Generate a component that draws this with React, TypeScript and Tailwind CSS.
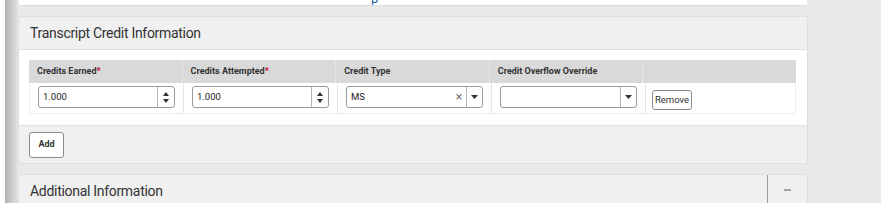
import React from "react";

const font = { fontFamily: "Roboto, 'Liberation Sans', sans-serif" };

function Spinner() {
  return (
    <div className="w-[17px] h-full border-l border-[#b5b5b5] flex flex-col items-center justify-center gap-[3px]">
      <svg width="6" height="4" viewBox="0 0 6 4">
        <path d="M3 0 L6 4 L0 4 Z" fill="#333" />
      </svg>
      <svg width="6" height="4" viewBox="0 0 6 4">
        <path d="M0 0 L6 0 L3 4 Z" fill="#333" />
      </svg>
    </div>
  );
}

function Caret() {
  return (
    <div className="w-[16px] h-full border-l border-[#b5b5b5] flex items-center justify-center">
      <svg width="7" height="4" viewBox="0 0 7 4">
        <path d="M0 0 L7 0 L3.5 4 Z" fill="#333" />
      </svg>
    </div>
  );
}

function NumberInput({ value }: { value: string }) {
  return (
    <div className="h-[22px] w-[137px] border border-[#9a9a9a] rounded-[3px] bg-white flex items-center">
      <span className="flex-1 pl-[4px] text-[9.5px] text-[#222]">{value}</span>
      <Spinner />
    </div>
  );
}

function Header({ label, required }: { label: string; required?: boolean }) {
  return (
    <div className="flex-1 border-r border-[#e6e6e6] last:border-r-0 px-[8px] flex items-center text-[9px] font-bold text-[#333]">
      {label}
      {required && <span className="text-[#d0021b]">*</span>}
    </div>
  );
}

function Cell({ children }: { children?: React.ReactNode }) {
  return (
    <div className="flex-1 border-r border-[#e6e6e6] last:border-r-0 px-[8px] pt-[3px]">
      {children}
    </div>
  );
}

export default function App() {
  return (
    <div className="w-[889px] h-[211px] bg-white overflow-hidden" style={font}>
      <div className="ml-[5px] w-[876px] h-[203px] bg-[#e9e9e9] flex overflow-hidden">
        <div className="w-[13px] shrink-0 bg-gradient-to-r from-[#b2b2b2] to-[#e4e4e4]" />
        <div className="w-[788px] ml-[1px] shrink-0 flex flex-col">
          {/* cut-off panel above */}
          <div className="h-[6px] shrink-0 bg-white border-b border-[#dcdcdc] relative overflow-hidden">
            <span className="absolute left-[352px] top-[-11px] text-[13px] text-[#1f5fa8]">p</span>
          </div>

          {/* Transcript Credit Information */}
          <div className="mt-[11px] h-[146px] shrink-0 rounded-[3px] shadow-[0_0_0_1px_#dedede] flex flex-col overflow-hidden">
            <div className="h-[33px] shrink-0 bg-[#f0f0f0] border-b border-[#e2e2e2] px-[11px] flex items-center text-[14px] tracking-[-0.3px] text-[#333]">
              Transcript Credit Information
            </div>
            <div className="bg-white px-[10px] pt-[10px] pb-[11px] shrink-0">
              <div className="w-[767px]">
                <div className="h-[23px] bg-[#d9d9d9] flex">
                  <Header label="Credits Earned" required />
                  <Header label="Credits Attempted" required />
                  <Header label="Credit Type" />
                  <Header label="Credit Overflow Override" />
                  <Header label="" />
                </div>
                <div className="h-[31px] flex border-b border-l border-r border-[#ececec]">
                  <Cell>
                    <NumberInput value="1.000" />
                  </Cell>
                  <Cell>
                    <NumberInput value="1.000" />
                  </Cell>
                  <Cell>
                    <div className="h-[22px] w-[137px] border border-[#9a9a9a] rounded-[3px] bg-white flex items-center">
                      <span className="flex-1 pl-[4px] text-[9.5px] text-[#222]">MS</span>
                      <span className="w-[14px] text-center text-[12px] text-[#777] leading-none">×</span>
                      <Caret />
                    </div>
                  </Cell>
                  <Cell>
                    <div className="h-[22px] w-[137px] border border-[#9a9a9a] rounded-[3px] bg-white flex items-center">
                      <span className="flex-1" />
                      <Caret />
                    </div>
                  </Cell>
                  <Cell>
                    <button className="ml-[-2px] h-[20px] w-[40px] border border-[#8a8a8a] rounded-[3px] bg-white text-[9.5px] text-[#333]">
                      Remove
                    </button>
                  </Cell>
                </div>
              </div>
            </div>
            <div className="flex-1 bg-[#f0f0f0] border-t border-[#e2e2e2] pl-[10px] pt-[4px]">
              <button className="h-[26px] w-[35px] border border-[#8a8a8a] rounded-[3px] bg-white text-[9px] font-bold text-[#333]">
                Add
              </button>
            </div>
          </div>

          {/* Additional Information */}
          <div className="mt-[12px] h-[40px] shrink-0 rounded-t-[3px] shadow-[0_0_0_1px_#dedede] bg-[#f0f0f0] flex">
            <div className="flex-1 px-[11px] pt-[6px] text-[14px] tracking-[-0.3px] text-[#333]">Additional Information</div>
            <div className="w-[40px] border-l border-[#9a9a9a] flex justify-center pt-[14px]">
              <div className="w-[7px] h-[2px] bg-[#a5a5a5]" />
            </div>
          </div>
        </div>
      </div>
    </div>
  );
}
